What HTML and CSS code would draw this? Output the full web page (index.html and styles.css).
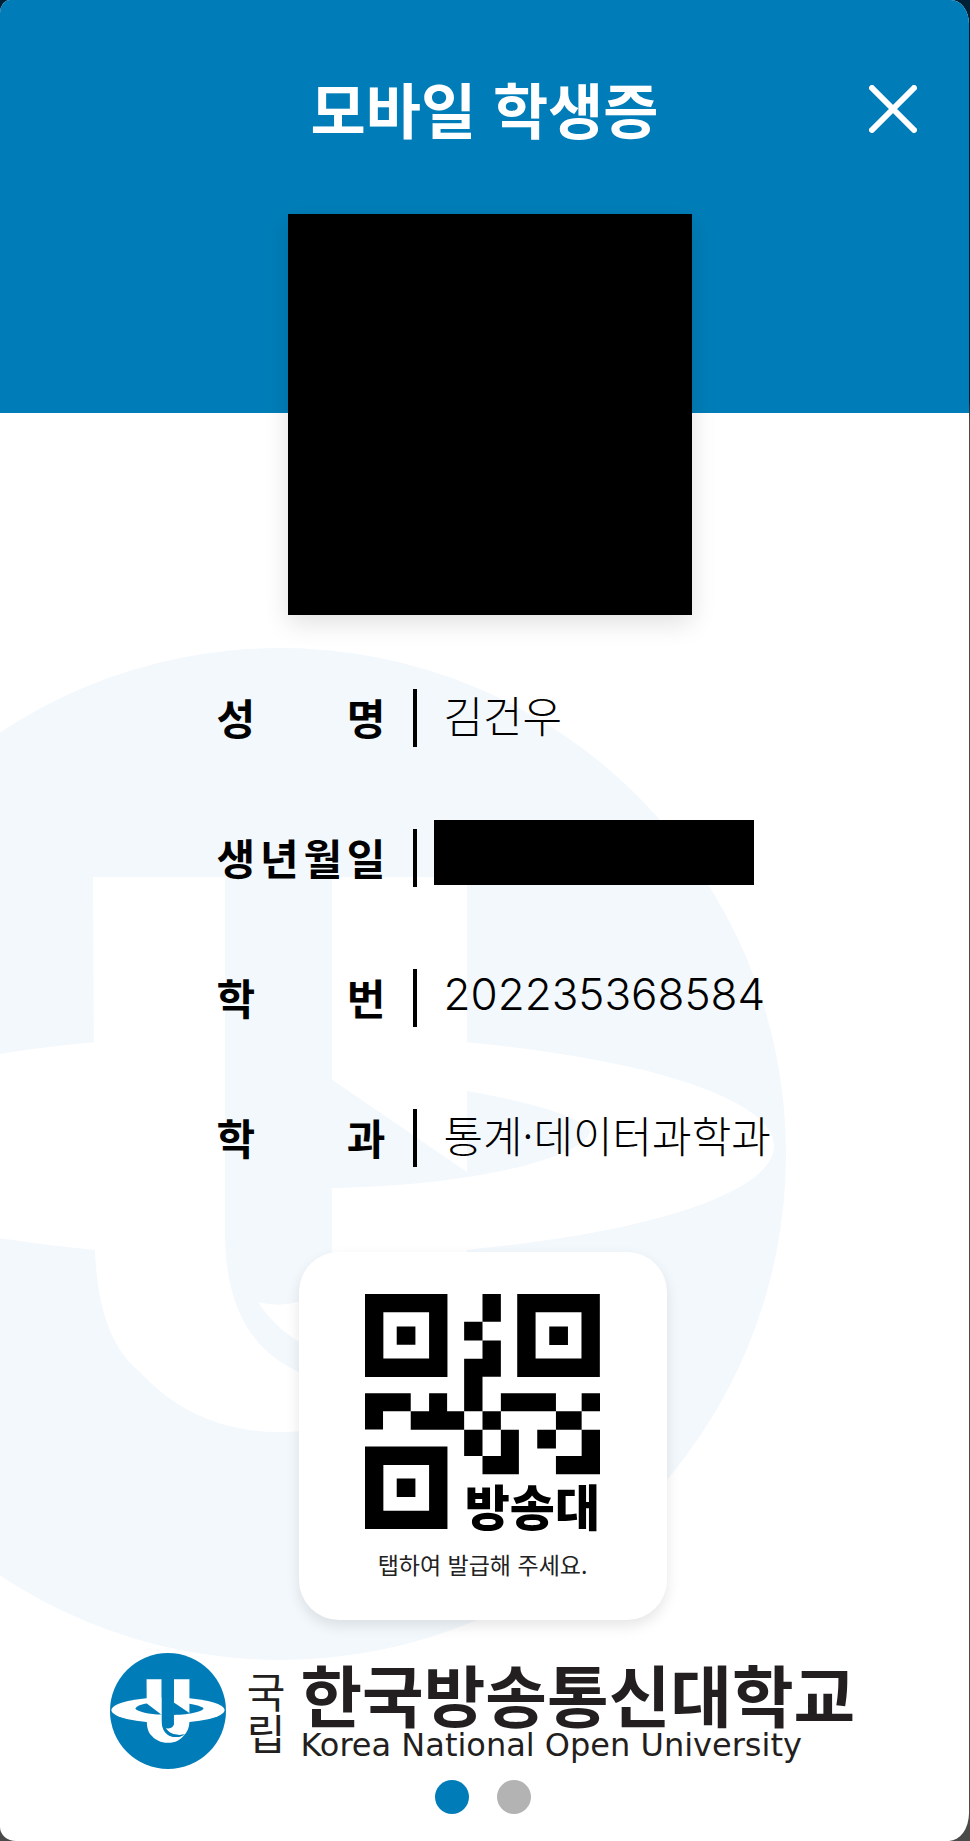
FILE: index.html
```html
<!DOCTYPE html>
<html lang="ko">
<head>
<meta charset="utf-8">
<meta name="viewport" content="width=device-width, initial-scale=1">
<title>모바일 학생증</title>
<link rel="stylesheet" href="styles.css">
</head>
<body>
<svg class="defs" aria-hidden="true">
  <symbol id="emblem" viewBox="-226 648 1012 1012">
    <circle cx="280" cy="1154" r="506" fill="currentColor"/>
    <g fill="#fff">
      <ellipse cx="280" cy="1146" rx="494" ry="112"/>
      <path d="M93 877H225V1235C226 1305 250 1350 299 1372C340 1388 385 1380 427 1358C390 1402 345 1432 280 1432C215 1432 170 1405 140 1372C110 1348 97 1305 95 1250Z"/>
      <path d="M332 877H467V1235C467 1290 455 1325 427 1358C350 1372 290 1352 258 1302C295 1311 330 1295 332 1258Z"/>
    </g>
    <g fill="currentColor">
      <path d="M225 870H332V1258C330 1295 295 1311 258 1302C290 1352 350 1372 427 1358C385 1380 340 1388 299 1372C250 1350 226 1305 225 1235Z"/>
      <path d="M331 1079L467 1172V1091C530 1102 575 1115 590 1130C590 1155 480 1186 331 1188Z"/>
    </g>
  </symbol>
</svg>

<main class="card">
  <header class="header">
    <h1 class="title">모바일 학생증</h1>
    <button class="close" type="button" aria-label="닫기">
      <svg viewBox="0 0 48 48" aria-hidden="true"><path d="M3 3L45 45M45 3L3 45"/></svg>
    </button>
  </header>

  <div class="photo" role="img" aria-label="사진"></div>

  <section class="body">
    <svg class="watermark" aria-hidden="true"><use href="#emblem"/></svg>

    <dl class="info">
      <div class="row">
        <dt class="label"><span>성</span><span>명</span></dt>
        <dd class="value">김건우</dd>
      </div>
      <div class="row">
        <dt class="label"><span>생</span><span>년</span><span>월</span><span>일</span></dt>
        <dd class="value hidden-value"><span class="redacted"></span></dd>
      </div>
      <div class="row">
        <dt class="label"><span>학</span><span>번</span></dt>
        <dd class="value number">202235368584</dd>
      </div>
      <div class="row">
        <dt class="label"><span>학</span><span>과</span></dt>
        <dd class="value">통계·데이터과학과</dd>
      </div>
    </dl>

    <button class="qr" type="button">
      <svg class="qr-code" viewBox="74 72 704 704" aria-hidden="true">
        <g fill="none" stroke="#000" stroke-width="55">
          <path d="M101.500 99.500H293.500V293H101.500ZM557.500 99.500H750V293H557.500ZM101.500 556.500H293.500V748.500H101.500Z"/>
        </g>
        <path d="M169 169h56v55h-56zM626 169h56v56h-56zM169 625h56v55h-56z
          M426 72h55v83h-55zM371 155h55v56h-55zM426 211h55v109h-55v103h-55V266h55z
          M74 369h137v54h55v-54h54v54h51v56H211v-56h-83v55H74z
          M481 369h165v54H481zM723 369h55v54h-55zM426 423h55v56h-55zM646 423h77v56h-77z
          M371 479h55v78h-55zM590 479h56v56h-56zM481 479h54v133H426v-55h55z
          M723 479h55v133H646v-55h77z"/>
      </svg>
      <span class="qr-name">방송대</span>
      <span class="qr-hint">탭하여 발급해 주세요.</span>
    </button>

    <footer class="brand">
      <svg class="logo" aria-hidden="true">
        <use href="#emblem"/>
        <svg viewBox="-226 648 1012 1012"><path fill="currentColor" d="M-5 1132C5 1110 50 1093 95 1088L221 1185C120 1184 10 1160 -5 1132Z"/></svg>
      </svg>
      <span class="brand-prefix"><span>국</span><span>립</span></span>
      <span class="brand-names">
        <span class="brand-ko">한국방송통신대학교</span>
        <span class="brand-en" lang="en">Korea National Open University</span>
      </span>
    </footer>

    <nav class="dots" aria-label="페이지">
      <button class="dot active" type="button" aria-label="1" aria-current="true"></button>
      <button class="dot" type="button" aria-label="2"></button>
    </nav>
  </section>
</main>
</body>
</html>
```
FILE: styles.css
```css
* { box-sizing: border-box; }

body {
  margin: 0;
  background: linear-gradient(#002038 0, #002038 400px, #4a4a4a 420px);
  font-family: "Noto Sans CJK KR", "Noto Sans CJK SC", sans-serif;
  color: #000;
}

button {
  padding: 0;
  border: 0;
  background: none;
  font: inherit;
  color: inherit;
}

.defs {
  position: absolute;
  width: 0;
  height: 0;
}

.card {
  position: relative;
  display: flex;
  flex-direction: column;
  align-items: center;
  min-height: 100vh;
  margin-right: 1px;
  overflow: hidden;
  background: #fff;
  border-radius: 10px 18px 20px 16px / 13px 24px 28px 14px;
}

.header {
  display: grid;
  grid-template-columns: 1fr auto 1fr;
  align-items: start;
  width: 100%;
  height: 413px;
  padding: 64px 52px 0;
  background: #007db8;
  color: #fff;
}

.title {
  grid-column: 2;
  margin: 0;
  font-size: 60px;
  font-weight: 700;
  line-height: 88px;
}

.close {
  justify-self: end;
  height: 90px;
}

.close svg {
  display: block;
  width: 48px;
  height: 48px;
  fill: none;
  stroke: #fff;
  stroke-width: 6;
  stroke-linecap: round;
}

.photo {
  position: relative;
  z-index: 1;
  width: 404px;
  height: 401px;
  margin: -199px 0 0 11px;
  background: #000;
  box-shadow: 0 8px 24px rgba(0, 0, 0, .12);
}

.body {
  position: relative;
  display: flex;
  flex: 1;
  flex-direction: column;
  align-items: center;
  width: 100%;
  padding: 74px 4px 0 0;
}

.watermark {
  position: absolute;
  top: 33px;
  left: -226px;
  width: 1012px;
  height: 1012px;
  color: #f3f8fd;
}

.info {
  position: relative;
  display: flex;
  flex-direction: column;
  gap: 82px;
  width: 564px;
  margin: 0 0 0 32px;
}

.row {
  display: flex;
  align-items: center;
  height: 58px;
}

.label {
  display: flex;
  flex: none;
  justify-content: space-between;
  width: 169px;
  font-size: 42px;
  font-weight: 700;
  line-height: 54px;
  padding-bottom: 3px;
}

.value {
  display: flex;
  flex: 1;
  align-items: center;
  height: 58px;
  margin: 0 0 0 27px;
  padding: 0 0 7px 27px;
  border-left: 4px solid #000;
  font-size: 43px;
  font-weight: 300;
  line-height: 51px;
  white-space: nowrap;
}

.number {
  font-family: Inter, "Noto Sans CJK KR", sans-serif;
  font-size: 44px;
}

.hidden-value { padding-left: 17px; }

.redacted {
  width: 320px;
  height: 65px;
  margin-bottom: 5px;
  flex: none;
  background: #000;
}

.qr {
  position: relative;
  display: grid;
  grid-template-columns: 235px;
  justify-content: center;
  justify-items: center;
  align-content: start;
  width: 368px;
  height: 368px;
  margin-top: 85px;
  padding-top: 42px;
  background: #fff;
  border-radius: 40px;
  box-shadow: 0 6px 14px rgba(0, 0, 0, .1);
}

.qr-code {
  grid-area: 1 / 1;
  width: 235px;
  height: 235px;
}

.qr-name {
  grid-area: 1 / 1;
  align-self: end;
  justify-self: end;
  font-size: 49px;
  font-weight: 900;
  line-height: 48px;
}

.qr-hint {
  margin-top: 18px;
  font-size: 23px;
  line-height: 34px;
  color: #222;
  white-space: nowrap;
}

.brand {
  position: relative;
  display: flex;
  align-items: center;
  margin-top: 33px;
  color: #231f20;
  white-space: nowrap;
}

.logo {
  width: 116px;
  height: 116px;
  color: #007db8;
}

.brand-prefix {
  display: flex;
  flex-direction: column;
  margin: 0 15px 0 21px;
  font-size: 42px;
  line-height: 42px;
}

.brand-names {
  display: flex;
  flex-direction: column;
}

.brand-ko {
  font-size: 67px;
  font-weight: 700;
  line-height: 68px;
}

.brand-en {
  font-family: "DejaVu Sans", sans-serif;
  font-size: 32px;
  line-height: 36px;
}

.dots {
  display: flex;
  gap: 28px;
  margin: 11px 0 27px;
}

.dot {
  width: 34px;
  height: 34px;
  border-radius: 50%;
  background: #b3b3b3;
}

.dot.active { background: #007db8; }
```
